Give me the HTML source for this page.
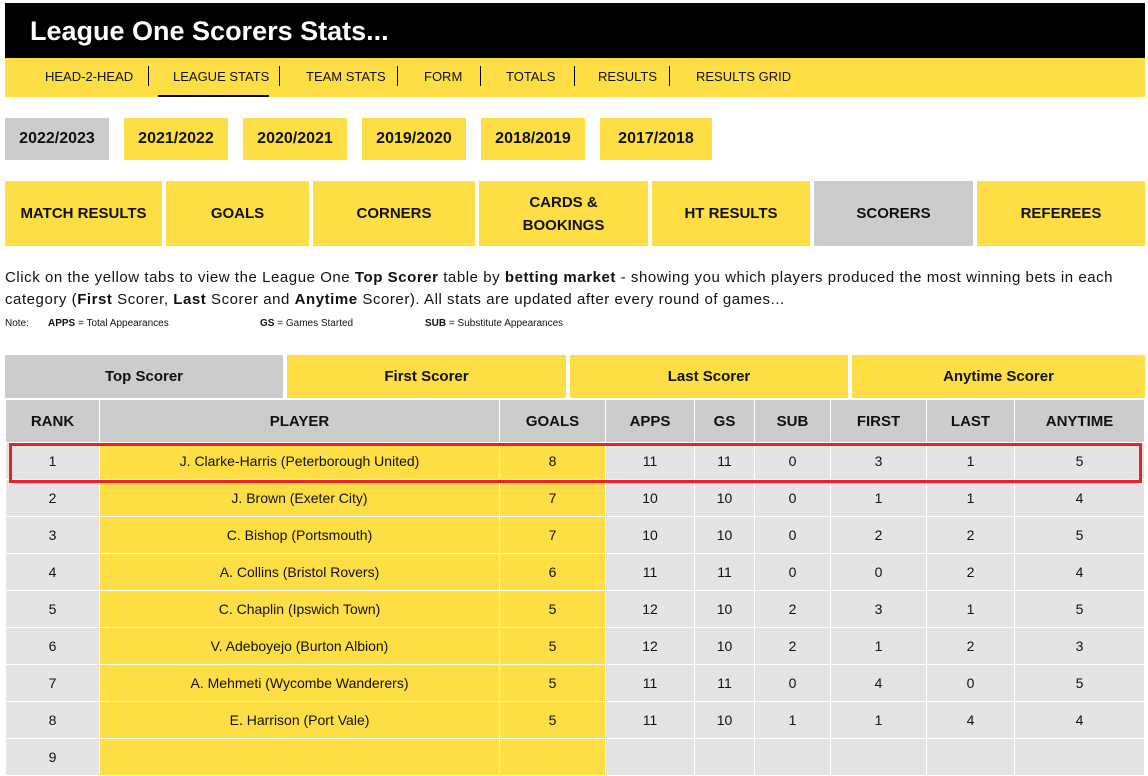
<!DOCTYPE html>
<html><head><style>
*{margin:0;padding:0;box-sizing:border-box}
body{width:1148px;height:743px;overflow:hidden;background:#fff;font-family:"Liberation Sans",sans-serif;color:#111;position:relative}
.abs{position:absolute}
.hdr{left:5px;top:3px;width:1140px;height:55px;background:#000;color:#fff;font-weight:bold;font-size:27px;padding:13px 0 0 25px}
.nav{left:5px;top:58px;width:1140px;height:39px;background:#fede45;font-size:13px}
.nav span{position:absolute;top:11px}
.sep{position:absolute;top:8px;width:1px;height:20px;background:#000}
.yr{top:118px;height:42px;width:104px;background:#fede45;font-weight:bold;font-size:16px;text-align:center;line-height:42px}
.cat{top:181px;height:65px;background:#fede45;font-weight:bold;font-size:15px;display:flex;align-items:center;justify-content:center;text-align:center;line-height:23px}
.p{left:5px;font-size:15px;line-height:22px;width:1140px;letter-spacing:0.55px;white-space:nowrap}
.note{top:318px;font-size:10px}
.st{top:355px;height:43px;background:#fede45;font-weight:bold;font-size:15px;text-align:center;line-height:43px}
table{position:absolute;left:5px;top:399px;border-collapse:collapse;width:1139px;font-size:14px;table-layout:fixed}
td,th{border:1px solid #fff;text-align:center}
th{background:#cccccc;height:43px;font-size:15px}
td{background:#e4e4e4;height:37px}
td.y{background:#fede45}
.red{left:9px;top:443px;width:1133px;height:40px;border:3px solid #e8212b}
</style></head><body>
<div class="abs hdr">League One Scorers Stats...</div>
<div class="abs nav">
<span style="left:40px">HEAD-2-HEAD</span><div class="sep" style="left:143px"></div>
<span style="left:168px">LEAGUE STATS</span><div class="sep" style="left:274px"></div>
<div style="position:absolute;left:153px;top:37px;width:111px;height:2px;background:#000"></div>
<span style="left:301px">TEAM STATS</span><div class="sep" style="left:392px"></div>
<span style="left:419px">FORM</span><div class="sep" style="left:475px"></div>
<span style="left:501px">TOTALS</span><div class="sep" style="left:569px"></div>
<span style="left:593px">RESULTS</span><div class="sep" style="left:664px"></div>
<span style="left:691px">RESULTS GRID</span>
</div>
<div class="abs yr" style="left:5px;background:#cccccc">2022/2023</div>
<div class="abs yr" style="left:124px">2021/2022</div>
<div class="abs yr" style="left:243px">2020/2021</div>
<div class="abs yr" style="left:362px">2019/2020</div>
<div class="abs yr" style="left:481px">2018/2019</div>
<div class="abs yr" style="left:600px;width:112px">2017/2018</div>
<div class="abs cat" style="left:5px;width:157px">MATCH RESULTS</div>
<div class="abs cat" style="left:166px;width:143px">GOALS</div>
<div class="abs cat" style="left:313px;width:162px">CORNERS</div>
<div class="abs cat" style="left:479px;width:169px">CARDS &amp;<br>BOOKINGS</div>
<div class="abs cat" style="left:652px;width:158px">HT RESULTS</div>
<div class="abs cat" style="left:814px;width:159px;background:#cccccc">SCORERS</div>
<div class="abs cat" style="left:977px;width:168px">REFEREES</div>
<div class="abs p" style="top:267px">Click on the yellow tabs to view the League One <b>Top Scorer</b> table by <b>betting market</b> - showing you which players produced the most winning bets in each<br>category (<b>First</b> Scorer, <b>Last</b> Scorer and <b>Anytime</b> Scorer). All stats are updated after every round of games...</div>
<div class="abs note" style="left:5px">Note:</div>
<div class="abs note" style="left:48px"><b>APPS</b> = Total Appearances</div>
<div class="abs note" style="left:260px"><b>GS</b> = Games Started</div>
<div class="abs note" style="left:425px"><b>SUB</b> = Substitute Appearances</div>
<div class="abs st" style="left:5px;width:278px;background:#cccccc">Top Scorer</div>
<div class="abs st" style="left:287px;width:279px">First Scorer</div>
<div class="abs st" style="left:570px;width:278px">Last Scorer</div>
<div class="abs st" style="left:852px;width:293px">Anytime Scorer</div>
<table>
<colgroup><col style="width:94px"><col style="width:400px"><col style="width:106px"><col style="width:89px"><col style="width:60px"><col style="width:76px"><col style="width:96px"><col style="width:88px"><col style="width:130px"></colgroup>
<tr><th>RANK</th><th>PLAYER</th><th>GOALS</th><th>APPS</th><th>GS</th><th>SUB</th><th>FIRST</th><th>LAST</th><th>ANYTIME</th></tr>
<tr><td>1</td><td class="y">J. Clarke-Harris (Peterborough United)</td><td class="y">8</td><td>11</td><td>11</td><td>0</td><td>3</td><td>1</td><td>5</td></tr>
<tr><td>2</td><td class="y">J. Brown (Exeter City)</td><td class="y">7</td><td>10</td><td>10</td><td>0</td><td>1</td><td>1</td><td>4</td></tr>
<tr><td>3</td><td class="y">C. Bishop (Portsmouth)</td><td class="y">7</td><td>10</td><td>10</td><td>0</td><td>2</td><td>2</td><td>5</td></tr>
<tr><td>4</td><td class="y">A. Collins (Bristol Rovers)</td><td class="y">6</td><td>11</td><td>11</td><td>0</td><td>0</td><td>2</td><td>4</td></tr>
<tr><td>5</td><td class="y">C. Chaplin (Ipswich Town)</td><td class="y">5</td><td>12</td><td>10</td><td>2</td><td>3</td><td>1</td><td>5</td></tr>
<tr><td>6</td><td class="y">V. Adeboyejo (Burton Albion)</td><td class="y">5</td><td>12</td><td>10</td><td>2</td><td>1</td><td>2</td><td>3</td></tr>
<tr><td>7</td><td class="y">A. Mehmeti (Wycombe Wanderers)</td><td class="y">5</td><td>11</td><td>11</td><td>0</td><td>4</td><td>0</td><td>5</td></tr>
<tr><td>8</td><td class="y">E. Harrison (Port Vale)</td><td class="y">5</td><td>11</td><td>10</td><td>1</td><td>1</td><td>4</td><td>4</td></tr>
<tr><td>9</td><td class="y">&nbsp;</td><td class="y"></td><td></td><td></td><td></td><td></td><td></td><td></td></tr>
</table>
<div class="abs red"></div>
</body></html>
